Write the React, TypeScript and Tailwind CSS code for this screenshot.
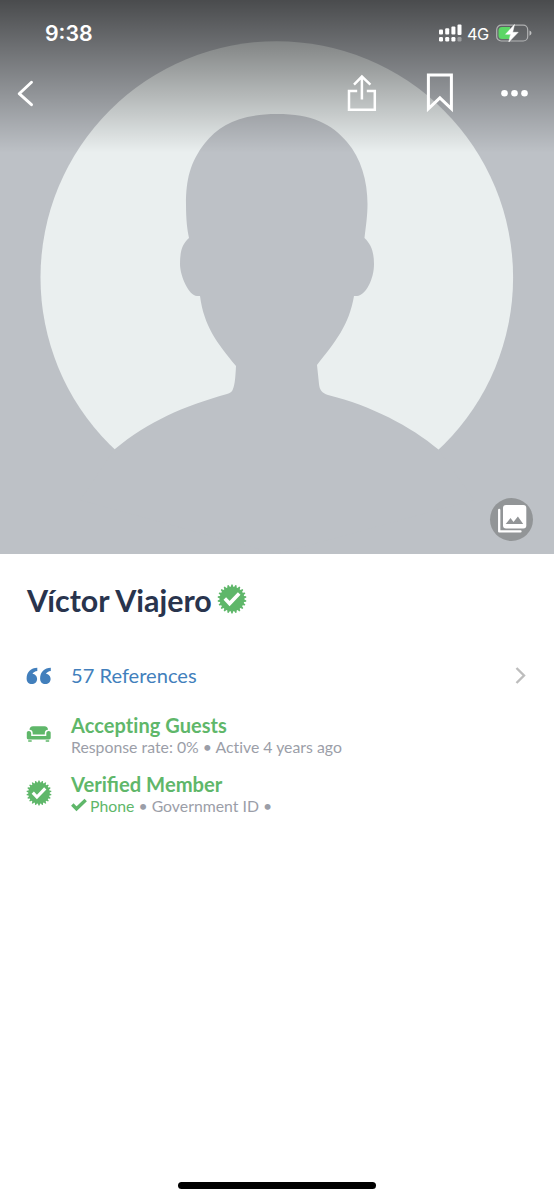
import type { ReactNode } from 'react';

const TEETH = 22;

// outline of the zigzag seal, alternating between outer and inner radius
const sealPoints = Array.from({ length: TEETH * 4 }, (_, i) => {
  const step = (Math.PI * 2) / TEETH;
  const phase = [-0.34, -0.16, 0.16, 0.34][i % 4];
  const angle = (Math.floor(i / 4) + phase) * step - Math.PI / 2;
  const radius = i % 4 === 1 || i % 4 === 2 ? 14.4 : 12.4;
  return `${(15 + radius * Math.cos(angle)).toFixed(2)},${(15 + radius * Math.sin(angle)).toFixed(2)}`;
}).join(' ');

function VerifiedSeal({ className }: { className: string }) {
  return (
    <svg viewBox="0 0 30 30" className={className}>
      <polygon points={sealPoints} fill="#5fb76a" />
      <path d="M7.8 14.600l4.800 5 9.600-10" fill="none" stroke="#fff" strokeWidth="3.600" />
    </svg>
  );
}

function Avatar() {
  return (
    <svg viewBox="0 0 554 554" className="block h-[554px] w-[554px]">
      <rect width="554" height="554" fill="#bdc1c6" />
      <circle cx="276.8" cy="277.5" r="236.3" fill="#eaefef" />
      <path
        d="M277 114C240 114 219 125 205 143C190 162 186 180 186 204C186 219 187 229 189 238C182 244 180 252 180 264C180 276 189 296 197 296H200C204 326 217 343 236 366C235.500 376 235 384 233 389C232 392 230 393 227 394C184 406 149 421 115 449L80 500L277 554L474 500L438.500 449.500C410 426 372 406 328 395C322 393 319.500 390 319 384L317 365C336 341 349 325 354 296H357C366 295 374 279 374 264C374 252 371 244 364.500 238C366 225 367.500 216 367.500 204C367.500 181 361 158 347 142C332 124 312 114 277 114Z"
        fill="#bdc1c6"
      />
    </svg>
  );
}

function StatusBar() {
  return (
    <div className="flex h-[66px] items-center justify-between pl-[45px] pr-[22px]">
      <span className="pt-px font-[Inter,sans-serif] text-[21.3px] leading-none font-semibold">9:38</span>
      <div className="flex items-center">
        <svg viewBox="0 0 24 18" className="h-[18px] w-6" fill="#fff">
          <rect x="0" y="5.500" width="4" height="5" rx="1" />
          <rect x="6.200" y="4.300" width="4" height="6.200" rx="1" />
          <rect x="12.400" y="2.500" width="4" height="8" rx="1" />
          <rect x="18.500" y="0.500" width="4" height="10.500" rx="1" />
          <rect x="0" y="13" width="4" height="4.500" rx="1.200" />
          <rect x="6.200" y="13" width="4" height="4.500" rx="1.200" />
          <rect x="12.400" y="13" width="4" height="4.500" rx="1.200" />
          <rect x="18.500" y="13" width="4" height="4.500" rx="1.200" opacity="0.35" />
        </svg>
        <span className="ml-1 w-[29px] pt-0.5 font-[Inter,sans-serif] text-[16.3px] leading-none tracking-tight">4G</span>
        <svg viewBox="0 0 36 18" className="h-[18px] w-9" fill="none">
          <rect x="0.700" y="1.200" width="31" height="15.800" rx="4.500" stroke="#fff" strokeOpacity="0.5" strokeWidth="1.200" />
          <path d="M6 3h8v12H6q-3.500 0-3.500-3.500v-5Q2.500 3 6 3z" fill="#5bd665" />
          <path d="M33.500 6.500q2 .8 2 2.600t-2 2.600z" fill="#fff" fillOpacity="0.6" />
          <path d="M18.500 .5L9.500 10.300h5L12.800 18 22.200 8.300h-5.500z" fill="#fff" stroke="#fff" strokeWidth="0.500" strokeLinejoin="round" />
        </svg>
      </div>
    </div>
  );
}

function ActionBar() {
  return (
    <div className="flex h-[54px] items-center justify-between pr-[26px] pl-4">
      <button aria-label="Back">
        <svg viewBox="0 0 20 28" className="h-7 w-5" fill="none" stroke="#fff" strokeWidth="2.900" strokeLinecap="round" strokeLinejoin="round">
          <path d="M15.500 3.200L3.200 14.700l12.300 11" />
        </svg>
      </button>
      <div className="flex items-center">
        <button aria-label="Share">
          <svg viewBox="0 0 30 38" className="h-[38px] w-[30px]" fill="none" stroke="#fff" strokeWidth="2.500">
            <path d="M10.200 17H2v18.800h25.800V17h-8" />
            <path d="M14.900 25.500V2.600M7 10.600l7.900-8 8.500 8" />
          </svg>
        </button>
        <button aria-label="Save" className="ml-[49px]">
          <svg viewBox="0 0 28 40" className="h-10 w-7" fill="none" stroke="#fff" strokeWidth="3">
            <path d="M2.400 2h23v33.800l-11.500-11-11.500 11z" />
          </svg>
        </button>
        <button aria-label="More" className="ml-[47px]">
          <svg viewBox="0 0 27 8" className="h-2 w-[27px]" fill="#fff">
            <circle cx="3.500" cy="4.300" r="3.300" />
            <circle cx="13.500" cy="4.300" r="3.300" />
            <circle cx="23.500" cy="4.300" r="3.300" />
          </svg>
        </button>
      </div>
    </div>
  );
}

function GalleryButton() {
  return (
    <button aria-label="Photos" className="absolute top-[498px] left-[490px] h-[43px] w-[43px] rounded-full bg-[#929597]">
      <svg viewBox="0 0 43 43" className="h-[43px] w-[43px]">
        <path d="M9.200 12v21.400h21.300" fill="none" stroke="#fff" strokeWidth="2.300" strokeLinecap="round" strokeLinejoin="round" />
        <rect x="13" y="7" width="23.300" height="23.500" rx="3" fill="#fff" />
        <path d="M15.700 26l4.800-6 3 4 4.400-5.500 5.300 7.500z" fill="#929597" />
      </svg>
    </button>
  );
}

function QuoteIcon() {
  return (
    <svg viewBox="0 0 26 18" className="h-[18px] w-[26px]" fill="#427fbc">
      <path d="M11.300.7C5 .9.600 5 .600 11.400.600 15 2.800 17 5.800 17c3 0 5.300-2.100 5.300-5.100S8.900 6.900 6.500 6.900c.9-1.700 2.500-2.700 4.800-3z" />
      <path d="M24.800.7C18.500.9 14.100 5 14.100 11.400c0 3.600 2.200 5.600 5.200 5.600s5.300-2.100 5.300-5.100-2.200-5-4.600-5c.9-1.700 2.500-2.700 4.800-3z" />
    </svg>
  );
}

function CouchIcon() {
  return (
    <svg viewBox="0 0 26 18" className="h-[18px] w-[26px]" fill="#5fb76a">
      <path d="M3.500 4.800C3.600 2.400 4.800 1.200 7 1.200h11.500c2.200 0 3.400 1.200 3.500 3.600-2.300.2-3.200 1.400-3.200 3.400v1.300H6.700V8.200c0-2-.9-3.200-3.200-3.400z" />
      <path d="M.800 7.800c0-1.200.8-1.900 2-1.900 1.600 0 2.400.9 2.400 2.500v2.700h15.100V8.400c0-1.600.8-2.500 2.400-2.500 1.200 0 2 .7 2 1.900v5c0 1.100-.7 1.700-1.800 1.700H2.600C1.500 14.500.8 13.900.8 12.800zM2.200 15.200h3.500v1.600H2.200zM19.700 15.200h3.500v1.600h-3.500z" />
    </svg>
  );
}

function StatusRow({ icon, title, children }: { icon: ReactNode; title: ReactNode; children: ReactNode }) {
  return (
    <div className="flex h-[59px] items-start">
      <div className="flex h-[42px] w-[45px] shrink-0 items-center">{icon}</div>
      <div>
        <h2 className="text-[20px] leading-6 font-bold text-[#5fb76a]">{title}</h2>
        <p className="-mt-px flex items-center text-[15.8px] leading-[21px] tracking-[0.01px] text-[#9b9ea8]">{children}</p>
      </div>
    </div>
  );
}

export default function App() {
  return (
    <div className="flex h-[1200px] w-[554px] flex-col bg-white font-[Lato,sans-serif]">
      <header className="relative h-[554px] overflow-hidden">
        <Avatar />
        <div className="absolute inset-x-0 top-0 h-[153px] bg-linear-to-b from-black/61 to-black/0 text-white">
          <StatusBar />
          <ActionBar />
        </div>
        <GalleryButton />
      </header>

      <main className="flex-1 px-[26px] pt-[26px]">
        <div className="flex h-10 items-center pl-px">
          <h1 className="text-[30.4px] leading-10 font-bold text-[#29344d]">Víctor Viajero</h1>
          <VerifiedSeal className="-mt-0.5 ml-[5px] h-[30px] w-[30px]" />
        </div>

        <div className="mt-9 flex h-10 items-center">
          <div className="w-[45px]">
            <QuoteIcon />
          </div>
          <span className="-mt-0.5 flex-1 text-[20.1px] text-[#427fbc]">57 References</span>
          <svg viewBox="0 0 14 18" className="h-[18px] w-[14px]" fill="none" stroke="#bdbdbd" strokeWidth="2.400">
            <path d="M2.500 1L10 8.500 2.500 16" />
          </svg>
        </div>

        <div className="mt-[17px]">
          <StatusRow icon={<CouchIcon />} title={<span className="tracking-[0.06px]">Accepting Guests</span>}>
            Response rate: 0% • Active 4 years ago
          </StatusRow>
          <StatusRow icon={<VerifiedSeal className="h-[26px] w-[26px]" />} title={<span className="text-[20.2px]">Verified Member</span>}>
            <svg viewBox="0 0 16 14" className="-mt-0.5 mr-[3px] h-[14px] w-4" fill="none" stroke="#5fb76a" strokeWidth="3.400">
              <path d="M1.300 6.500l4.200 4.300L14.700 2" />
            </svg>
            <span className="mr-1 text-[#5fb76a]">Phone</span>
            <span>• Government ID •</span>
          </StatusRow>
        </div>
      </main>

      <footer className="flex h-[18px] items-start justify-center">
        <div className="h-[7px] w-[198px] rounded-full bg-black" />
      </footer>
    </div>
  );
}
